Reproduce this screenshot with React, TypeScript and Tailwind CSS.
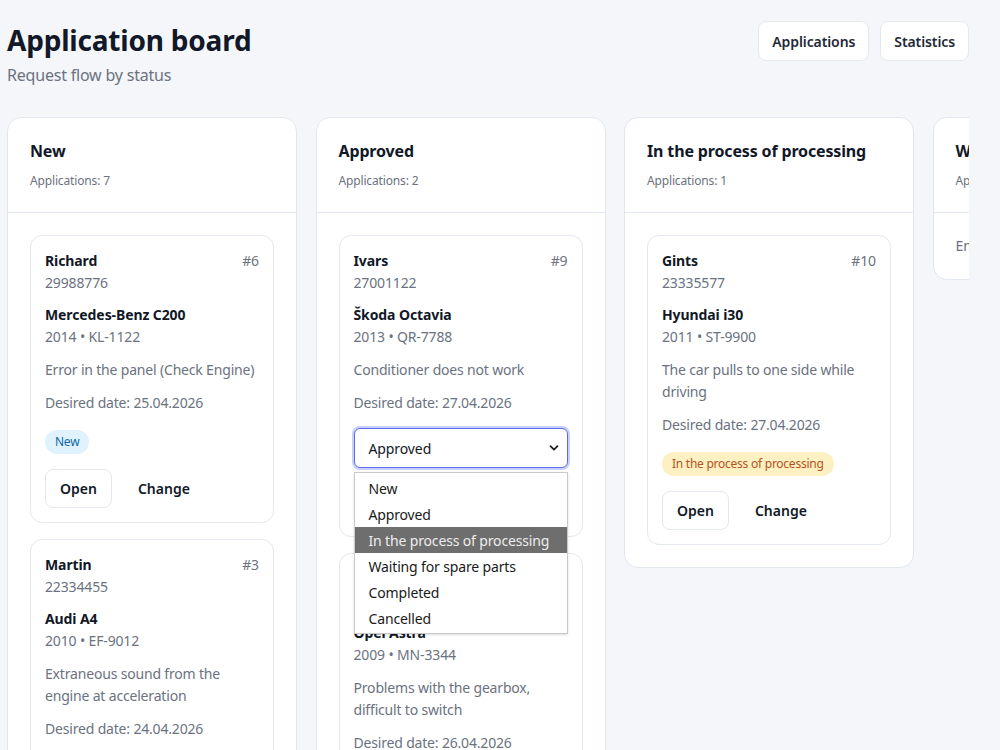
type Card = {
  id: number;
  name: string;
  phone: string;
  car: string;
  meta: string;
  desc: string;
  date: string;
  status: string;
};

const badgeStyles: Record<string, string> = {
  New: "bg-[#e0f2fe] text-[#0b6a9e]",
  Approved: "bg-[#dcfce7] text-[#15803d]",
  "In the process of processing": "bg-[#fdf0c2] text-[#b4531a]",
};

function CardView({ c, showSelect }: { c: Card; showSelect?: boolean }) {
  return (
    <div className="bg-white border border-[#e4e8ef] rounded-[12px] p-[14px]">
      <div className="flex justify-between items-start">
        <div className="text-[14px] leading-[22px] font-bold text-[#111827] tracking-[-0.1px]">{c.name}</div>
        <div className="text-[14px] leading-[22px] text-[#6b7280] tracking-[-0.1px]">#{c.id}</div>
      </div>
      <div className="text-[14px] leading-[22px] text-[#6b7280] tracking-[-0.15px]">{c.phone}</div>
      <div className="mt-[10px]">
        <div className="text-[14px] leading-[22px] font-bold text-[#111827] tracking-[-0.1px]">{c.car}</div>
        <div className="text-[14px] leading-[22px] text-[#6b7280] tracking-[-0.15px]">{c.meta}</div>
      </div>
      <div className="mt-[11px] text-[14px] leading-[22px] text-[#6b7280] tracking-[-0.18px]">{c.desc}</div>
      <div className="mt-[11px] text-[14px] leading-[22px] text-[#6b7280] tracking-[-0.18px]">Desired date: {c.date}</div>
      {showSelect ? (
        <div className="relative mt-[14px]">
          <div className="h-[40px] w-full border border-[#5b6ee8] rounded-[6px] ring-2 ring-[#c7d0fb] flex items-center justify-between pl-[14px] pr-[8px] text-[14px] text-[#111827] bg-white tracking-[-0.1px]">
            <span>{c.status}</span>
            <svg width="10" height="10" viewBox="0 0 10 10" fill="none">
              <path d="M1.5 3.2 L5 6.7 L8.5 3.2" stroke="#222" strokeWidth="1.8" strokeLinecap="round" strokeLinejoin="round" />
            </svg>
          </div>
          <div className="absolute left-0 right-0 top-[44px] z-10 bg-white border border-[#c9c9c9] py-[2px] text-[14px] tracking-[-0.15px] text-[#1a1a1a] shadow-sm">
            {["New", "Approved", "In the process of processing", "Waiting for spare parts", "Completed", "Cancelled"].map((o) => (
              <div
                key={o}
                className={
                  "h-[26px] flex items-center pl-[14px] " +
                  (o === "In the process of processing" ? "bg-[#6e6e6e] text-[#ececec]" : "")
                }
              >
                {o}
              </div>
            ))}
          </div>
        </div>
      ) : (
        <div className="mt-[16px] flex">
          <span className={"inline-flex items-center h-[24px] px-[10px] rounded-full text-[12px] tracking-[-0.25px] " + (badgeStyles[c.status] || "bg-gray-100 text-gray-700")}>
            {c.status}
          </span>
        </div>
      )}
      <div className="mt-[15px] flex gap-[10px]">
        <button className="h-[39px] px-[14px] border border-[#e4e8ef] rounded-[8px] text-[14px] font-semibold text-[#111827] bg-white">Open</button>
        <button className="h-[39px] px-[16px] rounded-[8px] text-[14px] font-semibold text-[#111827]">Change</button>
      </div>
    </div>
  );
}

type Column = { title: string; count: number; cards: Card[]; select?: boolean };

const columns: Column[] = [
  {
    title: "New",
    count: 7,
    cards: [
      { id: 6, name: "Richard", phone: "29988776", car: "Mercedes-Benz C200", meta: "2014 • KL-1122", desc: "Error in the panel (Check Engine)", date: "25.04.2026", status: "New" },
      { id: 3, name: "Martin", phone: "22334455", car: "Audi A4", meta: "2010 • EF-9012", desc: "Extraneous sound from the engine at acceleration", date: "24.04.2026", status: "New" },
      { id: 1, name: "Janis", phone: "26112233", car: "Volkswagen Golf", meta: "2012 • AB-1234", desc: "Oil change and filter", date: "23.04.2026", status: "New" },
    ],
  },
  {
    title: "Approved",
    count: 2,
    select: true,
    cards: [
      { id: 9, name: "Ivars", phone: "27001122", car: "Škoda Octavia", meta: "2013 • QR-7788", desc: "Conditioner does not work", date: "27.04.2026", status: "Approved" },
      { id: 4, name: "Edgars", phone: "26554433", car: "Opel Astra", meta: "2009 • MN-3344", desc: "Problems with the gearbox, difficult to switch", date: "26.04.2026", status: "Approved" },
    ],
  },
  {
    title: "In the process of processing",
    count: 1,
    cards: [
      { id: 10, name: "Gints", phone: "23335577", car: "Hyundai i30", meta: "2011 • ST-9900", desc: "The car pulls to one side while driving", date: "27.04.2026", status: "In the process of processing" },
    ],
  },
  { title: "Waiting for spare parts", count: 0, cards: [] },
  { title: "Completed", count: 0, cards: [] },
];

export default function App() {
  return (
    <div className="h-screen overflow-hidden bg-[#f4f6fa] font-['Noto_Sans',sans-serif] text-[#111827]">
      <div className="pl-[7px] pr-[31px] pt-[20px]">
        <div className="flex justify-between items-start">
          <div>
            <h1 className="text-[28px] leading-[40px] font-bold tracking-[-0.2px] text-[#111827]">Application board</h1>
            <p className="mt-[3px] text-[16px] leading-[24px] text-[#6b7280] tracking-[-0.2px]">Request flow by status</p>
          </div>
          <div className="flex gap-[11px] mt-[1px]">
            <button className="h-[40px] px-[13px] bg-white border border-[#e4e8ef] rounded-[8px] text-[14px] font-semibold text-[#1f2937] tracking-[-0.1px]">Applications</button>
            <button className="h-[40px] px-[13px] bg-white border border-[#e4e8ef] rounded-[8px] text-[14px] font-semibold text-[#1f2937] tracking-[-0.1px]">Statistics</button>
          </div>
        </div>
        <div className="mt-[30px] flex items-start gap-[18.5px] overflow-hidden">
          {columns.map((col) => (
            <div key={col.title} className="w-[290px] shrink-0 bg-white border border-[#e2e7ef] rounded-[14px]">
              <div className="p-[22px] border-b border-[#e2e7ef]">
                <div className="text-[16px] leading-[22px] font-bold text-[#111827] tracking-[-0.15px] whitespace-nowrap">{col.title}</div>
                <div className="mt-[10px] text-[12px] leading-[18px] text-[#6b7280] tracking-[-0.15px]">Applications: {col.count}</div>
              </div>
              <div className="p-[22px] flex flex-col gap-[16px]">
                {col.cards.length === 0 ? (
                  <div className="text-[14px] leading-[22px] text-[#6b7280]">Empty</div>
                ) : (
                  col.cards.map((c, i) => <CardView key={c.id} c={c} showSelect={col.select && i === 0} />)
                )}
              </div>
            </div>
          ))}
        </div>
      </div>
    </div>
  );
}
